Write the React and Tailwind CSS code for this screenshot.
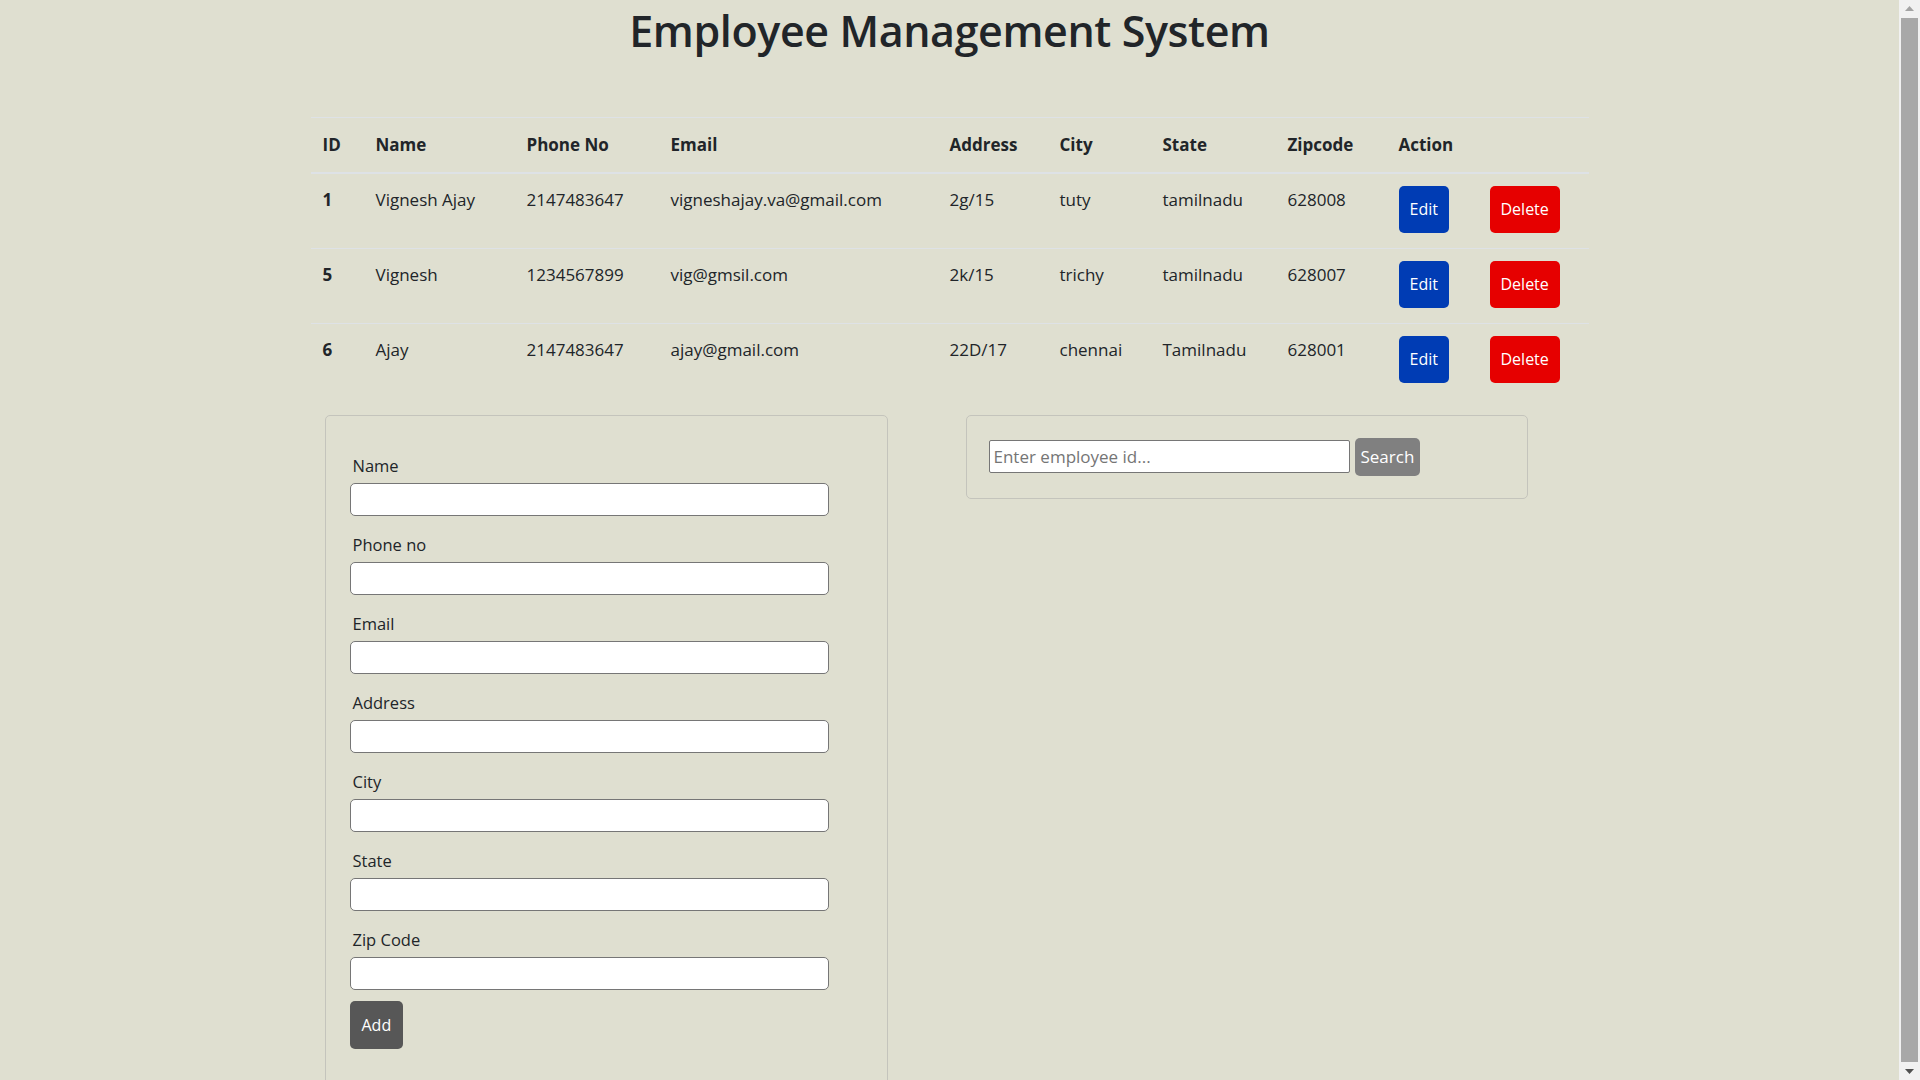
import { useState } from "react";

const employees = [
  { id: 1, name: "Vignesh Ajay", phone: "2147483647", email: "vigneshajay.va@gmail.com", address: "2g/15", city: "tuty", state: "tamilnadu", zip: "628008" },
  { id: 5, name: "Vignesh", phone: "1234567899", email: "vig@gmsil.com", address: "2k/15", city: "trichy", state: "tamilnadu", zip: "628007" },
  { id: 6, name: "Ajay", phone: "2147483647", email: "ajay@gmail.com", address: "22D/17", city: "chennai", state: "Tamilnadu", zip: "628001" },
];

const fields = ["Name", "Phone no", "Email", "Address", "City", "State", "Zip Code"];

export default function App() {
  const [search, setSearch] = useState("");

  return (
    <div className="h-screen flex overflow-hidden bg-[#dfdfd0] text-[#212529] font-['Open_Sans',sans-serif]">
      <div className="w-[1899px] shrink-0 pb-[40px]">
        {/* Title */}
        <h1 className="text-center text-[43px] font-semibold leading-[1.2] pt-[5px] tracking-[-0.4px]">Employee Management System</h1>

        {/* Table */}
        <table className="w-[1278px] mx-auto mt-[60px] table-fixed border-collapse text-[17px] leading-6">
          <colgroup>
            <col className="w-[53px]" />
            <col className="w-[151px]" />
            <col className="w-[144px]" />
            <col className="w-[279px]" />
            <col className="w-[110px]" />
            <col className="w-[103px]" />
            <col className="w-[125px]" />
            <col className="w-[111px]" />
            <col className="w-[91px]" />
            <col className="w-[111px]" />
          </colgroup>
          <thead>
            <tr className="border-t border-[#dee2e6] border-b-2">
              {["ID", "Name", "Phone No", "Email", "Address", "City", "State", "Zipcode", "Action", ""].map((h, i) => (
                <th key={i} className="text-left font-bold px-3 py-[15px] align-top">{h}</th>
              ))}
            </tr>
          </thead>
          <tbody>
            {employees.map(emp => (
              <tr key={emp.id} className="border-t border-[#dee2e6]">
                <td className="px-3 pt-[14px] pb-[14px] align-top font-bold">{emp.id}</td>
                <td className="px-3 pt-[14px] pb-[14px] align-top">{emp.name}</td>
                <td className="px-3 pt-[14px] pb-[14px] align-top">{emp.phone}</td>
                <td className="px-3 pt-[14px] pb-[14px] align-top">{emp.email}</td>
                <td className="px-3 pt-[14px] pb-[14px] align-top">{emp.address}</td>
                <td className="px-3 pt-[14px] pb-[14px] align-top">{emp.city}</td>
                <td className="px-3 pt-[14px] pb-[14px] align-top">{emp.state}</td>
                <td className="px-3 pt-[14px] pb-[14px] align-top">{emp.zip}</td>
                <td className="px-3 pt-[12px] pb-[15px] align-top">
                  <button className="bg-[#003cb4] text-white text-base rounded-[5px] px-[11px] h-[47px] leading-6">Edit</button>
                </td>
                <td className="px-3 pt-[12px] pb-[15px] align-top">
                  <button className="bg-[#e60000] text-white text-base rounded-[5px] px-[11px] h-[47px] leading-6">Delete</button>
                </td>
              </tr>
            ))}
          </tbody>
        </table>

        {/* Form + search */}
        <div className="w-[1278px] mx-auto mt-[17px] flex items-start">
          <div className="ml-[14px] w-[563px] border border-[#c4c4bc] rounded-[5px] px-6 pt-[38px] pb-[48px]">
            {fields.map((f, i) => (
              <div key={f} className={i === fields.length - 1 ? "" : "mb-[17px]"}>
                <label className="block ml-[3px] mb-[5px] leading-6 text-[16.5px]">{f}</label>
                <input className="block w-[479px] h-[33px] bg-white border border-[#767676] rounded-[5px] px-2 outline-none" />
              </div>
            ))}
            <button className="mt-[11px] bg-[#575757] text-white rounded-[5px] px-3 h-[48px] leading-6">Add</button>
          </div>

          <div className="ml-[78px] w-[562px] border border-[#c4c4bc] rounded-[5px] px-[22px] py-[22px] flex items-center gap-[5px]">
            <input
              value={search}
              onChange={e => setSearch(e.target.value)}
              placeholder="Enter employee id..."
              className="w-[361px] h-[33px] bg-white border border-[#767676] rounded-[2px] px-1 text-[17px] outline-none placeholder:text-[#757575]"
            />
            <button className="bg-[#808080] text-white rounded-[5px] px-[6px] h-[38px] leading-6 text-[17px]">Search</button>
          </div>
        </div>
      </div>

      {/* browser scrollbar */}
      <div className="w-[21px] shrink-0 bg-[#f1f1f1] flex flex-col items-center">
        <div className="h-[17px] flex items-center justify-center">
          <svg width="9" height="5" viewBox="0 0 9 5"><path d="M4.5 0 L9 5 L0 5 Z" fill="#a3a3a3" /></svg>
        </div>
        <div className="flex-1 w-[17px] bg-[#a8a8a8] my-[1px]" />
        <div className="h-[17px] flex items-center justify-center">
          <svg width="9" height="5" viewBox="0 0 9 5"><path d="M0 0 L9 0 L4.5 5 Z" fill="#505050" /></svg>
        </div>
      </div>
    </div>
  );
}
